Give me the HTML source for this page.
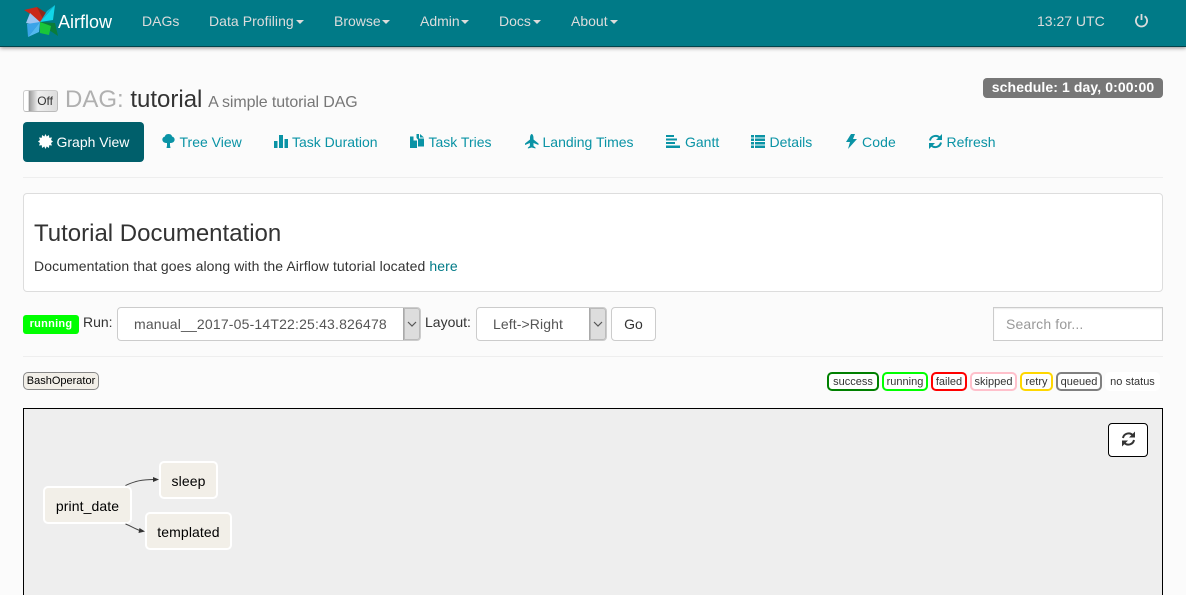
<!DOCTYPE html>
<html><head><meta charset="utf-8"><title>Airflow</title>
<style>
html,body{margin:0;padding:0;width:1186px;height:595px;overflow:hidden;background:#fbfbfb;font-family:"Liberation Sans",sans-serif;font-size:14px;color:#333}
#wrap{position:relative;width:1186px;height:595px;overflow:hidden}
.a{position:absolute;white-space:nowrap}
#nav{left:0;top:0;width:1186px;height:46px;background:#007a87;border-bottom:1px solid #00444c;box-shadow:0 1px 4px rgba(0,0,0,.45)}
.n{top:13px;color:#dcdcdc;line-height:16px}
.n i{display:inline-block;width:0;height:0;border-left:4px solid transparent;border-right:4px solid transparent;border-top:4px solid #dcdcdc;vertical-align:middle;margin-left:2px}
.t{top:134px;line-height:16px;color:#0a93a5}
hr{position:absolute;margin:0;border:0;height:1px;background:#eee}
.sel{background:#fff;border:1px solid #ccc;border-radius:4px;box-sizing:border-box;height:34px;color:#555;line-height:32px}
.ar{position:absolute;right:0;top:0;width:16px;height:32px;background:#ddd;border-left:1px solid #aaa;border-radius:0 3px 3px 0;box-shadow:inset 0 0 0 1px #bbb}
.st{top:372px;height:19px;box-sizing:border-box;border:2px solid #000;border-radius:5px;background:#fff;font-size:11px;line-height:16px;text-align:center;color:#333}
.node{box-sizing:border-box;background:#f2efe8;border:2px solid #fff;border-radius:5px;color:#000;text-align:center;line-height:36px;height:38px;letter-spacing:.1px}
</style></head><body><div id="wrap">
<div class="a" id="nav"></div>
<svg class="a" style="left:24px;top:4px" width="36" height="34" viewBox="0 0 36 34">
<polygon points="0,6 13,3 25,11 16,18 8,11" fill="#c9281a"/><polygon points="13,3 25,11 19,15" fill="#8e2a1c"/>
<polygon points="31,1 29,16 16,18 24,9" fill="#11d6ea"/><polygon points="31,1 16,18 23,7" fill="#0fb4d0"/>
<polygon points="16,18 31,19 34,32 25,26" fill="#0a7c3a"/><polygon points="16,18 27,22 25,31 16,29" fill="#19c63a"/>
<polygon points="16,18 6,9 2,19 12,21" fill="#9cc4f2"/><polygon points="16,18 3,20 4,33" fill="#3aa3e8"/><polygon points="16,18 4,33 15,28" fill="#52b8f0"/>
</svg>
<div class="a" style="left:58px;top:11px;color:#fff;font-size:18px;line-height:22px">Airflow</div>
<div class="a n" style="left:142px">DAGs</div>
<div class="a n" style="left:209px;letter-spacing:.05px">Data Profiling<i></i></div>
<div class="a n" style="left:334px">Browse<i style="margin-left:1px"></i></div>
<div class="a n" style="left:420px">Admin<i style="margin-left:1px"></i></div>
<div class="a n" style="left:499px">Docs<i></i></div>
<div class="a n" style="left:571px">About<i></i></div>
<div class="a n" style="left:1037px">13:27 UTC</div>
<svg class="a" style="left:1134px;top:13px" width="15" height="15" viewBox="0 0 15 15" fill="none" stroke="#dcdcdc" stroke-width="1.8"><path d="M4.4 3.2a5.6 5.6 0 1 0 6.2 0"/><path d="M7.5 1v6"/></svg>

<div class="a" style="left:983px;top:78px;width:180px;height:20px;background:#777;border-radius:4px;color:#fff;font-weight:bold;line-height:19px;text-align:center;letter-spacing:.1px">schedule: 1 day, 0:00:00</div>

<div class="a" style="left:23px;top:90px;width:35px;height:22px;box-sizing:border-box;border:1px solid #ccc;border-bottom-color:#bbb;border-right-color:#bbb;border-radius:3px;background:linear-gradient(90deg,#fff 0,#fff 13%,#999 15%,#eee 42%,#ddd 100%);font-size:12px;line-height:20px;color:#333;text-align:right;padding-right:4px">Off</div>
<div class="a" style="left:65px;top:86px;font-size:24px;line-height:28px;color:#b0b0b0">DAG: <span style="color:#333">tutorial</span> <span style="font-size:16px;color:#777;letter-spacing:-.12px;margin-left:-1px">A simple tutorial DAG</span></div>

<div class="a" style="left:23px;top:122px;width:121px;height:40px;background:#005f6b;border-radius:4px"></div>
<svg class="a" style="left:38px;top:134px" width="15" height="15" viewBox="0 0 15 15"><path fill="#fff" d="M7.5 0l1.2 2.5L11 1l.2 2.700L14 3.500l-1 2.500 2 1.500-2 1.500 1 2.500-2.800-.2L11 14l-2.300-1.500L7.500 15l-1.200-2.500L4 14l-.2-2.700L1 11.500 2 9 0 7.500 2 6 1 3.500l2.800.2L4 1l2.300 1.500z"/></svg>
<div class="a" style="left:56.500px;top:134px;color:#fff;line-height:16px">Graph View</div>

<svg class="a" style="left:162px;top:134px" width="13" height="15" viewBox="0 0 13 15"><path fill="#0a93a5" d="M6.500 0C9 0 10 1.500 10 2.500c2 .5 3 2 2.500 4-.4 1.500-2 2.500-4.500 2.500v2.500l.5 2.500h-4l.5-2.500V9C2.500 9 .9 8 .5 6.500 0 4.500 1 3 3 2.500 3 1.500 4 0 6.500 0z"/></svg>
<div class="a t" style="left:179.500px">Tree View</div>
<svg class="a" style="left:274px;top:135px" width="14" height="13" viewBox="0 0 14 13"><path fill="#0a93a5" d="M0 6h3.500v7H0zM5 0h4v13H5zM10.500 4H14v9h-3.500z"/></svg>
<div class="a t" style="left:292px">Task Duration</div>
<svg class="a" style="left:410px;top:134px" width="15" height="15" viewBox="0 0 15 15"><path fill="#0a93a5" d="M0 2.500h3.500V6.500H7V14H0zM6.500 0H9v4.500h5V12.500H8V5.500L6.500 4zM10 0l4 3.500h-4z"/></svg>
<div class="a t" style="left:428.500px">Task Tries</div>
<svg class="a" style="left:525px;top:134px" width="14" height="15" viewBox="0 0 14 15"><path fill="#0a93a5" d="M6.700 0C7.700 0 8.500 2 8.500 4v1.500L13.500 9.500V11L8.500 9v3l2 1.500v1L6.700 13.500l-3.800 1v-1l2-1.500V9L0 11V9.500L5 5.500V4C5 2 5.700 0 6.700 0z"/></svg>
<div class="a t" style="left:542.500px">Landing Times</div>
<svg class="a" style="left:666px;top:135px" width="14" height="13" viewBox="0 0 14 13"><path fill="#0a93a5" d="M0 0h8v2H0zM0 3.500h11v2H0zM0 7h9v2H0zM0 10.500h14V13H0z"/></svg>
<div class="a t" style="left:685px">Gantt</div>
<svg class="a" style="left:751px;top:135px" width="14" height="13" viewBox="0 0 14 13"><path fill="#0a93a5" d="M0 0h3v2.500H0zM4 0h10v2.500H4zM0 3.500h3V6H0zM4 3.500h10V6H4zM0 7h3v2.500H0zM4 7h10v2.500H4zM0 10.500h3V13H0zM4 10.500h10V13H4z"/></svg>
<div class="a t" style="left:769.500px">Details</div>
<svg class="a" style="left:846px;top:134px" width="11" height="15" viewBox="0 0 11 15"><path fill="#0a93a5" d="M5 0h4L7 5h4L2 15l2-7H0z"/></svg>
<div class="a t" style="left:862px;letter-spacing:.1px">Code</div>
<svg class="a" style="left:928px;top:134px" width="15" height="15" viewBox="0 0 15 15" fill="none" stroke="#0a93a5" stroke-width="2"><path d="M2 6.500A5.700 5.700 0 0 1 12 4"/><path d="M13 8.500A5.700 5.700 0 0 1 3 11"/><path fill="#0a93a5" stroke="none" d="M14 0v6H8zM1 15V9h6z"/></svg>
<div class="a t" style="left:946.500px">Refresh</div>

<hr style="left:23px;top:177px;width:1140px">
<div class="a" style="left:23px;top:193px;width:1140px;height:99px;box-sizing:border-box;background:#fff;border:1px solid #ddd;border-radius:4px"></div>
<div class="a" style="left:34px;top:220px;font-size:24px;line-height:28px;color:#333">Tutorial Documentation</div>
<div class="a" style="left:34px;top:258px;line-height:16px;letter-spacing:.085px">Documentation that goes along with the Airflow tutorial located <span style="color:#007a87">here</span></div>

<div class="a" style="left:23px;top:315px;width:56px;height:19px;background:#0f0;border-radius:3px;color:#fff;font-weight:bold;font-size:11px;line-height:18px;text-align:center;letter-spacing:.25px">running</div>
<div class="a" style="left:83px;top:314px;line-height:16px">Run:</div>
<div class="a sel" style="left:117px;top:307px;width:304px;padding-left:16px;letter-spacing:.18px">manual__2017-05-14T22:25:43.826478<div class="ar"><svg style="position:absolute;left:3px;top:13px" width="10" height="6" fill="none" stroke="#555" stroke-width="1.200"><path d="M1 1l4 4 4-4"/></svg></div></div>
<div class="a" style="left:425px;top:314px;line-height:16px">Layout:</div>
<div class="a sel" style="left:476px;top:307px;width:131px;padding-left:16px;letter-spacing:.1px">Left-&gt;Right<div class="ar"><svg style="position:absolute;left:3px;top:13px" width="10" height="6" fill="none" stroke="#555" stroke-width="1.200"><path d="M1 1l4 4 4-4"/></svg></div></div>
<div class="a sel" style="left:611px;top:307px;width:45px;text-align:center;color:#333">Go</div>
<div class="a sel" style="left:993px;top:307px;width:170px;padding-left:12px;color:#999;border-radius:0;letter-spacing:.15px;box-shadow:inset 0 1px 1px rgba(0,0,0,.075)">Search for...</div>

<hr style="left:23px;top:356px;width:1140px">
<div class="a" style="left:23px;top:372px;width:76px;height:18px;box-sizing:border-box;border:1px solid #888;border-radius:5px;background:#f2efe8;font-size:11px;line-height:16px;text-align:center;color:#000">BashOperator</div>

<div class="a st" style="left:827px;width:52px;border-color:#008000">success</div>
<div class="a st" style="left:882px;width:46px;border-color:#0f0">running</div>
<div class="a st" style="left:931px;width:36px;border-color:#f00">failed</div>
<div class="a st" style="left:970px;width:47px;border-color:#ffc0cb">skipped</div>
<div class="a st" style="left:1020px;width:33px;border-color:#ffd700">retry</div>
<div class="a st" style="left:1056px;width:46px;border-color:#808080">queued</div>
<div class="a st" style="left:1105px;width:55px;border-color:#fff">no status</div>

<div class="a" style="left:23px;top:408px;width:1140px;height:200px;box-sizing:border-box;background:#eee;border:1px solid #000"></div>
<div class="a" style="left:1108px;top:423px;width:40px;height:34px;box-sizing:border-box;background:#fff;border:1px solid #000;border-radius:4px"></div>
<svg class="a" style="left:1121px;top:431px" width="15" height="16" viewBox="0 0 15 15" fill="none" stroke="#333" stroke-width="2"><path d="M2 6.500A5.700 5.700 0 0 1 12 4"/><path d="M13 8.500A5.700 5.700 0 0 1 3 11"/><path fill="#333" stroke="none" d="M14 0v6H8zM1 15V9h6z"/></svg>

<div class="a node" style="left:43px;top:486px;width:89px">print_date</div>
<div class="a node" style="left:159px;top:461px;width:59px">sleep</div>
<div class="a node" style="left:145px;top:512px;width:87px">templated</div>
<svg class="a" style="left:120px;top:470px" width="50" height="70" fill="none" stroke="#444" stroke-width="1"><path d="M5.500 15.500C15 11 22 9.500 34 9.500"/><path d="M5.500 54C11 56 15 59 20 60.500"/><path fill="#333" stroke="none" d="M39 9.500l-6-2.500v5zM25 61.500l-5.500-3.500-1 5z"/></svg>
</div></body></html>
